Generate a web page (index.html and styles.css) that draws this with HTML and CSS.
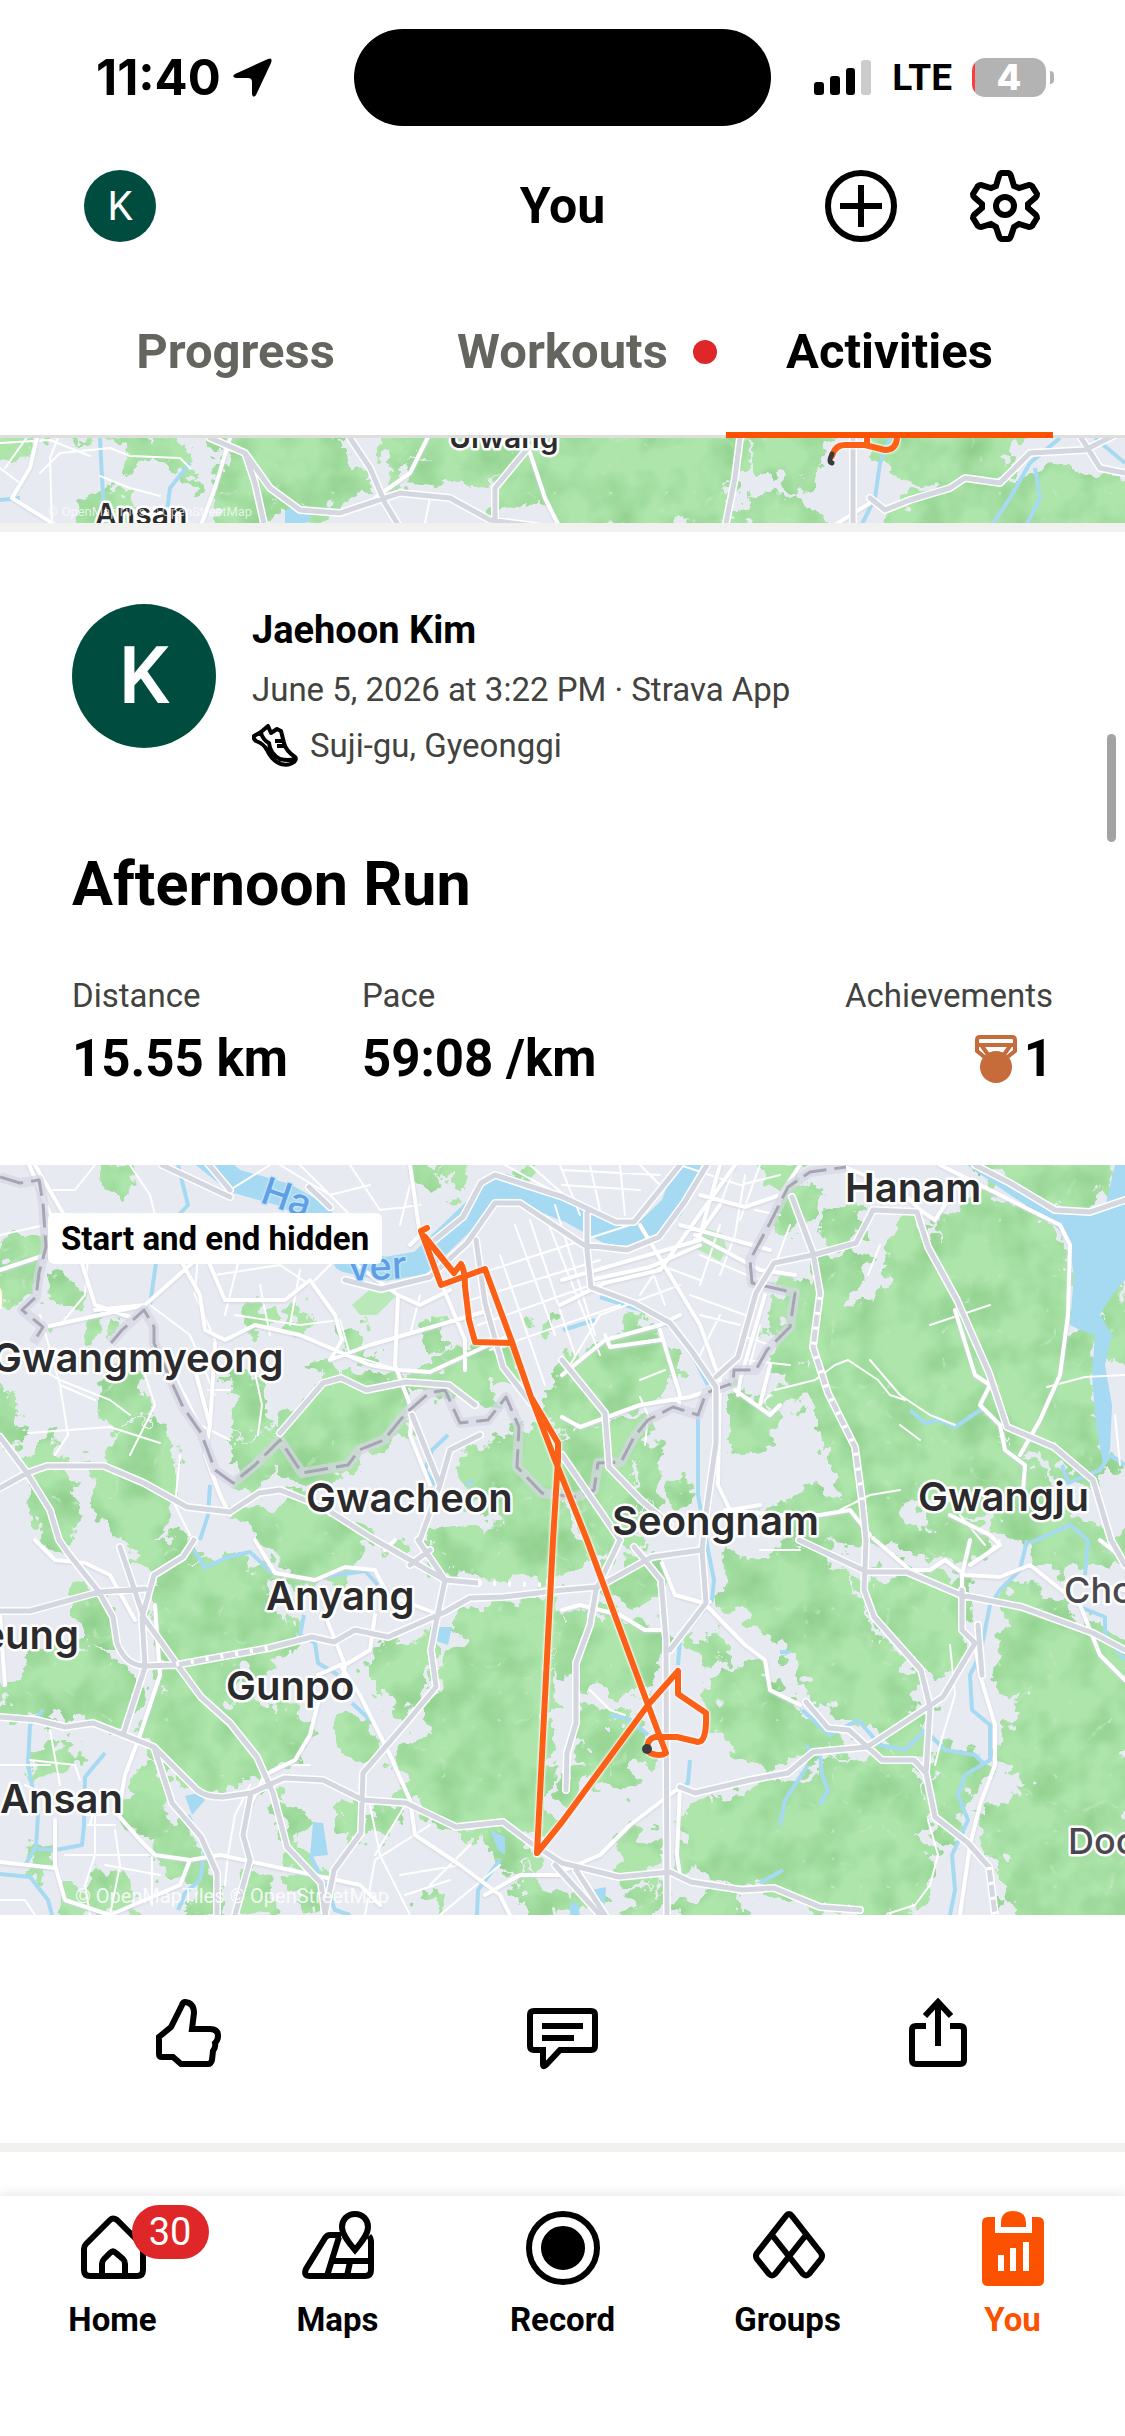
FILE: index.html
```html
<!DOCTYPE html>
<html lang="en">
	<head>
		<meta charset="UTF-8" />
		<meta name="viewport" content="width=device-width, initial-scale=1.0" />
		<title>You - Activities</title>
		<link rel="stylesheet" href="styles.css">
	</head>
	<body>
		<div class="status-bar">
			<div class="status-time">
				<span>11:40</span>
				<svg width="40" height="40" viewBox="0 0 40 40"><path d="M35 1Q40-1 38 5L23 37Q20 41 19 36V24Q19 20 15 20H3Q-2 19 2 16Z" /></svg>
			</div>
			<div class="island"></div>
			<div class="status-icons">
				<svg width="58" height="36" viewBox="0 0 58 36">
					<rect x="0" y="22" width="10" height="13" rx="3" />
					<rect x="16" y="16" width="10" height="19" rx="3" />
					<rect x="32" y="8" width="9" height="27" rx="3" />
					<rect x="47" y="0" width="10" height="35" rx="3" fill="#ccc" />
				</svg>
				<span class="network">LTE</span>
				<div class="battery"><span>4</span></div>
			</div>
		</div>

		<header class="header">
			<a href="#profile" class="avatar avatar-small">K</a>
			<h1>You</h1>
			<div class="header-actions">
				<button aria-label="Add">
					<svg class="icon" width="72" height="72" viewBox="0 0 72 72"><circle cx="36" cy="36" r="33" /><path d="M36 15V57M15 36H57" /></svg>
				</button>
				<button aria-label="Settings">
					<svg class="icon" width="72" height="72" viewBox="0 0 72 72"><path d="M33 3H39Q41 3 42 6L45 16 50 18 60 15Q62 15 63 16L68 24Q68 26 67 27L59 34V38L67 45Q68 46 68 48L63 56Q62 57 60 57L50 54 45 57 42 66Q41 69 39 69H33Q31 69 30 66L27 57 22 54 12 57Q10 57 9 56L4 48Q4 46 5 45L13 38V34L5 27Q4 26 4 24L9 16Q10 15 12 15L22 18 27 16 30 6Q31 3 33 3Z" /><circle cx="36" cy="36" r="9" /></svg>
				</button>
			</div>
		</header>

		<nav class="tabs">
			<a href="#progress" class="tab">Progress</a>
			<a href="#workouts" class="tab"><span class="tab-label">Workouts<i class="dot"></i></span></a>
			<a href="#activities" class="tab active">Activities</a>
		</nav>

		<main class="feed">
			<!-- Shared map styling -->
			<svg class="defs" width="0" height="0">
				<filter id="terrain" x="-5%" y="-5%" width="110%" height="110%" color-interpolation-filters="sRGB">
					<feTurbulence type="fractalNoise" baseFrequency="0.045" numOctaves="4" seed="4" result="noise" />
					<feDisplacementMap in="SourceGraphic" in2="noise" scale="48" xChannelSelector="R" yChannelSelector="G" result="forest" />
					<feTurbulence type="fractalNoise" baseFrequency="0.025" numOctaves="3" seed="9" />
					<feColorMatrix values="0 0 0 0 0.56  0 0 0 0 0.81  0 0 0 0 0.55  2 0 0 0 -0.8" />
					<feComposite in2="forest" operator="in" result="shade" />
					<feTurbulence type="turbulence" baseFrequency="0.018" numOctaves="3" seed="21" />
					<feColorMatrix values="0 0 0 0 0.74  0 0 0 0 0.91  0 0 0 0 0.74  -12 0 0 0 0.9" />
					<feComposite in2="forest" operator="in" result="ridges" />
					<feMerge>
						<feMergeNode in="forest" />
						<feMergeNode in="shade" />
						<feMergeNode in="ridges" />
					</feMerge>
				</filter>
			</svg>

			<svg class="map" viewBox="0 0 1125 85" role="img" aria-label="Previous activity map">
				<g class="forest" filter="url(#terrain)">
					<path d="M0-10H40L30 10 0 20ZM80-5 120 0 130 25 150 10 185 30 195 45 180 25 175 5 145 0ZM220-10H330L340 20 365 45 330 60 300 75 270 60 250 30 235 50ZM225 40 240 20 270 75 260 90H215ZM390-10H450L440 10 410 20 395 40 380 15ZM415 30 440 35 438 45 420 45ZM470-10 520-5 505 25 480 45 460 40 430 30ZM500 45 530 10 560-10H735L735 20 728 60 715 85H560L535 60 500 70ZM745-10H825L830 10 810 20 800 50 780 30 755 35ZM870-10H1030L1000 20 980 40 940 45 920 40 890 30 880 10ZM740 75 770 55 800 65 830 90H735ZM900 70 960 50 1010 40 1080 30 1125 50V95H890ZM80 65 100 50 130 60 120 90H80ZM225 60 250 50 240 90H220Z" />
				</g>
				<g class="water-line"><path d="M100 0 102 40 105 90M190 25 170 50 165 90M0 62 20 60M890 0 880 25 875 60 860 90M1060 0 1030 25 1010 60 990 90M1035 30 1040 60 1025 90M1095 0 1125 25" /></g>
				<path class="water" d="M285 72 300 68 312 80 300 90H285Z" />
				<g class="road minor"><path d="M0 5 50 2 90 18M40 35 60 15 110 10 130 18 180 20 190 30M100 38 130 50 160 58M0 30 20 45M60-5 50 20 52 90M430 60 425 85M30-5 5 30" /></g>
				<g class="road street"><path d="M38-5 30 30 12 60 60 90M230 0 215 50 200 90M430-5 410 35 375 60M525 0 545 60 560 90M870 65 830 90" /></g>
				<g class="road highway-case"><path id="peekRoads" d="M210 0 245 15 270 50 300 72 340 75 400 55 450 60 490 82 550 90M245 15 255 45 265 90M350 0 370 30 385 65 400 90M528 10 495 50 495 90M740 0 735 40 725 90M853-5V90M870 60 885 72 910 62 950 50 965 40 1000 45 1030 15 1085 12 1125-8M1075-10 1100 30 1125 35" /></g>
				<use href="#peekRoads" class="road highway" />
				<g class="route"><path d="M897 0Q896 12 885 12L865 7H845Q835 7 832 18M867 0V7" /></g>
				<path d="M832 16Q828 24 832 25" fill="none" stroke="#3a3a3a" stroke-width="5" stroke-linecap="round" />
				<g class="place place-small">
					<text x="449" y="10">Uiwang</text>
					<text x="95" y="87">Ansan</text>
				</g>
				<text class="credit credit-small" x="48" y="78">© OpenMapTiles © OpenStreetMap</text>
			</svg>

			<article class="activity">
				<div class="athlete">
					<div class="avatar avatar-large">K</div>
					<div class="athlete-info">
						<h3>Jaehoon Kim</h3>
						<p class="date">June 5, 2026 at 3:22 PM · Strava App</p>
						<p class="place-line">
							<svg class="shoe" width="46" height="44" viewBox="0 0 46 44"><path d="M2 12 9 8 16 2 19 9 25 5 29 7 32 19Q34 27 43 33 45 35 42 38 37 42 29 40 20 37 15 26 12 20 4 17 1 15 2 12ZM9 9Q11 16 17 19 18 30 28 35 36 37 43 35M23 17H31M25 22H33" /></svg>
							<span>Suji-gu, Gyeonggi</span>
						</p>
					</div>
				</div>

				<h2>Afternoon Run</h2>

				<dl class="stats">
					<div>
						<dt>Distance</dt>
						<dd>15.55 km</dd>
					</div>
					<div>
						<dt>Pace</dt>
						<dd>59:08 /km</dd>
					</div>
					<div class="achievements">
						<dt>Achievements</dt>
						<dd>
							<svg width="44" height="48" viewBox="0 0 44 48"><path d="M13 24 3 16V5Q3 2 6 2H38Q41 2 41 5V16L31 24M3 10H41M8 11 15 21M36 11 29 21" fill="none" stroke="#c66b3a" stroke-width="4" /><circle cx="22" cy="32" r="16" fill="#c66b3a" /></svg>
							<span>1</span>
						</dd>
					</div>
				</dl>

				<div class="map-box">
					<svg class="map" viewBox="0 0 1125 750" role="img" aria-label="Route map">
						<g class="forest" filter="url(#terrain)">
							<!-- North and west -->
							<path d="M105 0 128 5 125 28 105 25ZM0 78 40 75 30 130 0 140ZM53 115 80 125 65 145ZM85 160 105 155 95 180 82 175ZM250 145 268 150 262 165 250 160ZM290 155 305 145 308 160 295 165ZM350 165 365 175 372 195 355 190ZM430 155 445 160 440 185 430 180ZM415-5 435 0 432 18ZM447 0 462 5 455 30ZM520 0 532 0 530 20 520 15ZM535 160 548 155 545 165ZM108 215 130 208 145 245 118 262 103 240ZM230 215 255 208 262 258 240 268ZM310 205 328 198 330 218ZM95 290 150 258 172 290 165 345 140 375 100 350ZM33 290 50 278 72 330 68 380H45ZM0 220 20 260 12 280 0 270Z" />
							<path d="M262 272 320 225 350 215 406 220 410 250 395 275 360 290 345 310 300 318 278 300 258 320 235 310 232 285ZM240 345 300 335 350 365 400 380 350 378 348 410 300 418 285 395 260 375ZM400 215 430 203 470 190 510 182 515 205 482 215 500 238 460 225 425 222ZM458 300 505 272 548 265 560 300 556 385 520 385 500 355 465 330ZM545 230 563 215 575 240 555 260Z" />
							<!-- Central hills -->
							<path d="M130 380 175 375 190 385 155 405 140 395ZM155 425 170 402 200 398 240 395 268 408 262 440 290 465 285 485 268 485 270 505 232 500 225 525 238 548 300 545 298 580 270 610 235 612 225 632 195 620 160 590 148 580 160 535 155 510 180 505 160 465ZM82 430 108 430 112 465 95 478 82 455ZM25 497 60 480 100 490 132 512 125 560 80 552 40 550 0 542V530L30 522ZM128 620 150 600 168 650 155 680 130 650ZM35 590 72 580 75 600 40 605ZM32 685 50 688 45 705 30 700ZM60 730 110 710 130 735 100 750H62ZM155 655 180 660 205 700 220 740 200 755 190 715 160 700ZM242 705 262 710 270 750H245ZM278 640 295 650 300 690 335 730 310 740 290 700ZM340 645 360 640 360 670 342 665ZM365 650 400 640 385 665Z" />
							<path d="M425 370H563V408H450ZM460 448 552 435 545 600 540 665 500 652 460 662 420 640 395 605 430 565 440 520 450 490 468 470ZM365 495 395 480 432 475 425 502 415 530 400 547 385 530 365 512ZM342 562 365 550 374 580 350 590ZM485 660 520 665 530 700 510 700 495 680ZM515 715 540 712 563 735V750H530ZM425 735 440 730 440 745Z" />
							<!-- Seongnam -->
							<path d="M562 205 605 178 665 188 672 210 640 235 600 248 580 262 560 235ZM562 270 600 262 645 255 635 290 615 300 628 330 640 378H600L570 330ZM635 280 650 260 655 300 650 360 640 330ZM562 375H605L590 402 562 405ZM600 420 650 395 658 415 640 430ZM562 455 600 448 662 468 655 500 640 530 600 520 562 505ZM580 550 640 560 640 590 620 622 590 610ZM562 600 580 610 570 640ZM630 670 655 680 652 720 620 715ZM575 720 600 740 590 750H565ZM620 745 660 730 655 750ZM700 470 725 485 720 495 702 485ZM675 325 690 320 692 335 675 340ZM615 165 650 160 655 175 620 180ZM725 225 770 245 765 280 735 285Z" />
							<path d="M765 0 800 0 780 25ZM792 20 815 25 810 45 785 62 775 65 780 40ZM828 48 862 45 865 68 835 75 822 60ZM785 120 805 130 800 180 790 210 775 195ZM772 230 800 205 825 210 820 225 790 240ZM775 345 800 330 835 335 865 345 900 340 900 375H800L780 360Z" />
							<!-- Namhansanseong and the eastern hills -->
							<path d="M820 98 860 90 850 130 870 145 890 110 900 60 922 60 940 110 960 160 975 205 988 240 990 275 1015 295 1050 315 1070 350 1100 385H1050L1000 350 960 335 915 330 890 350 845 335 848 300 830 290 818 250 800 225 810 195 805 150ZM945 60 990 30 1030 45 1062 72 1066 160 1060 200 1035 250 1020 288 1000 262 985 220 960 160 935 100ZM1075 168 1092 165 1088 205 1095 270 1112 300 1080 325 1050 290 1035 275 1050 240ZM975-5H1108L1100 30 1080 45 1050 38 1020 15ZM1085 55 1112 60 1108 90 1090 85ZM1100 150 1125 120V200L1110 180ZM900 375 960 345 985 380 960 395Z" />
							<path d="M725 402 770 388 820 385 850 420 862 460 895 500 918 518 900 545 870 568 850 550 830 540 800 510 790 480 760 455 730 440ZM865 418 900 408 960 418 960 470 945 512 925 500 900 470 870 440ZM712 522 740 505 765 510 770 530 800 545 830 570 842 585 800 592 770 595 730 582 712 560ZM775 625 820 605 880 590 912 600 925 640 905 660 925 680 935 700 920 730 900 750 850 742 800 732 750 720 715 715 690 690 685 650 720 640 740 625ZM700 730 740 735 750 755H690ZM885 560 920 545 922 590 900 590ZM1005 475 1060 465 1095 490 1130 530V755H1010L1000 690 985 645 1040 632 1010 600 1008 560 1040 540 1000 520ZM1010 420 1060 440 1125 485V530L1060 500 1005 460ZM1025 370H1125V400L1090 395 1060 402 1035 390ZM935 590 975 590 985 610 960 632 950 680 935 650ZM950 480 970 475 960 500Z" />
						</g>
						<path class="park" d="M352 140 375 120 397 130 377 150 360 150ZM693 82 703 63 722 68 727 85 720 96Z" />

						<!-- Water -->
						<path class="river" d="M200-12 235 16 285 30 320 50 345 95 385 104 420 98 447 72 475 45 490 25 505 21 570 46 612 69 645 68 672 42 692-10" />
						<path class="water" d="M964-2H978L1011 20 1057 45 1085 50 1105 42 1115 0H1125V115L1112 130 1100 150 1112 170 1105 200 1112 240 1110 285 1103 300 1096 260 1092 210 1095 170 1080 165 1070 160 1074 110 1068 75 1050 55 1010 30ZM185 631 198 628 205 635 192 650ZM313 657 323 658 328 690 310 692ZM438 462 452 462 448 480 436 476ZM490 665 505 672 505 690 498 685ZM463 318 475 315 470 322ZM592 725 606 722 605 740ZM570 738 578 738 580 750H570Z" />
						<g class="water-line">
							<path d="M178 0 188 40 160 70 150 140M194 385 205 403 228 392 250 387 272 408M325 412 365 406 378 420M304 450 300 470 315 478 318 498 338 510M352 538 370 555M43 545 30 560 28 600 38 650 36 682 25 700M0 709 30 712 48 735 52 750M105 588 85 612 84 660 82 680 55 685 38 684M188 650 205 685 200 715 185 728 178 745M310 690 325 720 335 745 350 750M500 695 478 725 477 750M210 320 208 350 200 375M448 270 432 285 425 305 435 320" />
							<path d="M563 165 595 155M600 132 650 148 675 165 695 195 708 220M698 250V330L708 385 714 415 712 435 680 475 678 500M690 595 688 618 680 625M610 550 630 555 648 570M780 487H790M910 245 925 258 940 255 955 262 985 242M1062 300 1068 318 1100 305 1110 290 1125 300M1030 378 1070 360 1088 375M1027 375 1020 405 1000 425 990 440 980 490 970 510 972 545 990 560 990 595 965 610 958 630 968 655 952 690 955 725 950 750M802 545 830 570 858 555 880 580 905 585 925 565M925 565 945 585 975 590 985 600M810 590 807 580M820 590 822 610 828 625 820 640M808 600 785 635 780 660M1080 442 1105 452 1105 470 1125 495M783 705 760 718M1088 375 1085 410" />
						</g>

						<!-- Local streets -->
						<g class="road minor">
							<path d="M0 70 45 60 90 65 130 55M50 25 75 25 95 0M130 0 150 30 160 70M90 65 85 130 60 160M160 70 220 90 250 60M200 60 195 130 215 175M240 90 225 150M215 110 280 100 310 120 340 90M235 150 300 160 340 155 350 190 400 205M260 120 270 170M300 105 290 160M150 140 190 170 215 230M40 150 60 220 95 235M60 220 68 270 55 290M15 190 60 215 110 235 130 250M28 268 110 262 160 278M145 210 155 240 130 290M170 200 200 260 230 275M208 225H230M255 208 262 240 258 270M180 290 175 340 190 370M420 130 410 170M400 60 410 20M230 25 270 0M280 0 330 30 370 20M350 0 380 45 420 40M300 0 350 50" />
							<path d="M475 110 630 60M470 135 600 95M478 160 605 115M490 185 620 140M515 60 555 170M530 55 575 190M545 50 600 190M500 90 545 220M555 40 595 170M570 200 600 150 680 120M505 0 560 30M530 0 570 35M560 0 580 50M590 0 600 45M620 0 625 50M640 0 660 20M562 20 640 25M562 5 660 10M610 110 660 100 700 115M660 100 640 130M700 90 770 120M690 130 745 150M720 60 700 120M735 0 720 40M745 10 735 70 720 110M760 0 740 55M780 50 755 45M790 60 775 100M700 150 740 160M720 150 700 190M740 170 770 180M760 160 750 200M680 0 740 20 780 10M650 100 665 140" />
							<path d="M0 600 50 600M50 565 60 620M30 595 75 600 80 615M25 620 60 635 85 640M95 640 90 660M85 650H100M88 660H115M65 690H150M95 640V690L85 720 90 750M152 690V740M115 665 120 700 110 750M105 700 160 710M370 640 380 690 410 750M375 695 430 660M405 640 375 690M430 720 470 680M400 710 460 700M440 750 500 700M405 730 450 715M375 695 365 750M0 735 25 735 35 750M250 620 235 650 228 690 225 720M290 600 310 600" />
							<path d="M745 195 790 200M770 230 760 240M870 195 900 230 930 250 955 260M840 345 870 330 900 325M960 350 985 380M1000 375 980 395M775 225 815 215 835 200 848 195 878 215 890 230 905 235M1047 222 1085 212 1125 210M1115 250 1120 300M950 480 955 530 940 580 935 600M928 655 938 690 930 720 915 740 890 748M590 525 610 545 625 550" />
							<path d="M640 232 648 250 645 280M640 215 665 205M760 385H800M900 260 920 275M930 160 990 140M880 80 868 110" />
						</g>
						<!-- Main streets -->
						<g class="road street">
							<path d="M35 0 70 60 95 140 130 152M27-5 55 60M0 105 45 90M95 145 145 140 190 100 210 80M45 162 145 140M155 60 250 55M175 85 200 130 205 165 225 175 255 160 300 170 370 200 400 205 430 207 510 170M210 100 225 135H285L310 115 335 150 342 175 330 195M395 200 398 130 350 95M398 130 420 140 450 125M395 200 412 245 410 270 430 320M330 195 370 180 490 145M440 115 465 175 465 205M410 0 420 70 410 80M195 205 210 260 205 290 220 330 230 350M215 178 210 260M35 375 55 395 85 398 110 410 135 455M0 450 5 520M155 440 160 510 140 570 125 610 118 650M118 650 140 675 155 690 190 695 220 690 290 705 360 720 380 740M55 655V700L65 735 110 750 180 720 190 695M0 697 55 703M255 375 275 408 315 415 345 402 375 405 388 430 440 450M325 450 345 500 340 530M345 500 370 485 375 450M340 500 360 530 390 590 410 635 415 670 460 700 500 730 510 750M320 530 310 570 295 595 265 610 250 640M385 385 395 375M485 730 520 710 560 710M345 498 318 510" />
							<path d="M560 140 605 118 660 105 735 0M590 115 650 102 700 80M695 70 760 105 795 110M680 60 770 85M640 60 700 160 720 215M562 115 700 75M562 210 605 175 660 160 680 150M605 170 610 182 660 175M660 165 680 230 678 245M562 252 580 262 640 240 690 232 710 225M720 215 718 320 730 345 760 340M735 225 770 250 780 240M765 130 740 215 738 230M760 240 770 200M720 40 695 75M720 0 700 70M700 30 745 42 780 30 800 0M840 0 900 25 920 45M920 45 935 55 945 40M940 0 1000 30 1060 60 1070 80 1068 150 1060 210 1040 255 1020 290M955 145 975 210 990 220 980 240 1000 260 1005 285 1025 300 1022 340M725 345 780 350 820 350 850 345 870 370M873 373 910 405 930 405 945 395 965 410 1000 412 1030 400 1080 440 1100 490 1125 515M970 375 962 410V430M1100 375 1125 395M662 398 675 430 700 437H710M562 445 580 440 620 450 645 465 662 465M706 440 745 480 765 495 770 525 800 540M975 480 980 510 995 560 995 600 980 640 970 680 960 750M680 622 677 690 680 710M680 622 630 660 600 690 565 705M950 350 990 370 1000 380 970 400M1125 425 1090 420" />
						</g>

						<!-- City limits -->
						<g class="limit-case">
							<path id="limit" d="M0 12 20 18 39 15 43 38 46 82 39 108 36 132 22 145 43 162 33 178M111 178 122 165 144 145 154 162V178L172 218 183 242 201 268 215 305 233 318 255 300 280 275 302 308 348 300 359 285 384 275 406 248 429 228 445 225 460 258 488 255 506 232 519 262 517 302 542 328 576 332 594 325 598 298 621 297 634 272 648 255 673 242 698 250 706 228 733 218 734 205 756 205 767 185 790 162 795 128 752 118 750 95 770 58 788 22 810 7 846 2" />
						</g>
						<use href="#limit" class="limit" />

						<!-- Expressways -->
						<g class="road highway-case">
							<path id="highways" d="M0 323 27 308 47 301H104L144 318 187 342 230 347 259 328 280 325 323 342 370 372 445 415 478 418M0 272 27 308 50 345 59 375 68 388 99 427 113 452 117 478Q125 500 144 501L176 500 269 483 312 472 334 477 355 465 388 472 445 447 470 433 503 432 563 425 598 422 652 392 702 385M0 446H30L99 427 145 424M194 375 183 392 154 410 142 452 145 502 124 567M120 382 144 453 176 498 201 532 230 558 257 592 273 628 287 682 321 718 325 750M0 552 36 555 65 562 93 558 129 572 154 582 197 625Q205 632 223 632L251 628 284 613 323 615 363 635 406 638 456 662 503 657 531 678 562 698 619 712 670 707 691 717 742 725 774 723 820 742 860 745M154 582 172 638 201 672 217 708V750M418 375 445 415 436 458 431 485 436 522 406 558 363 608 361 668 334 705 325 750M430 385 410 400M251 628 243 670 250 695 235 750M280 268 323 218 341 213 366 225 406 217 449 220 475 240M412 250 440 320 420 375M440 320 450 285 480 270M476 75 485 138 503 202 531 238" />
							<path id="highways2" d="M162 0 230 32M309 22 330 42M205-5 230 25M345 115 381 124 430 112 467 78 495 38 520 38 584 80 627 85 659 72 684 38 707 0M431 78 463 52 481 18 495 10 563 32 616 57H634L680 0M587 48V85L591 122 634 138 670 158 691 185 716 222V278L706 348 702 385 706 438 670 485M716 212 738 192 756 128 774 98 813 90 856 78 873 45 917 47 928 82 957 135 989 208 1007 262 1054 282 1093 315 1111 375 1125 400M975 0 1010 18 1055 45 1090 47 1125 35M792 32 813 88 820 128 813 182 828 228 855 282 862 335 866 375 864 425 874 452 921 505 930 542 926 608 935 652 968 678 989 702 995 750M799 375 867 407H907L961 430 1022 442 1093 468 1125 485M962 425V465L975 478 943 532 867 582 813 587 788 608 750 615 695 628 680 622M806 537 828 563 849 565 882 595H914L926 608M634 382 661 415 666 475 667 750M620 375 596 425 590 460 576 498V558L567 588 566 625M562 195 605 248 609 302 641 335 670 360M562 290 620 375M555 700 600 750M576 705 605 750M978 460 982 510" />
						</g>
						<use href="#highways" class="road highway" />
						<use href="#highways2" class="road highway" />
						<path class="tunnel" d="M820 132 813 182 828 228 855 282 862 335M176 499 269 483M989 702 995 750M478 418 550 420" />

						<g class="river-name">
							<text transform="translate(259 37) rotate(19)">Ha</text>
							<text transform="translate(349 116) rotate(-3)">ver</text>
						</g>
						<g class="place">
							<text x="-8" y="207">Gwangmyeong</text>
							<text x="306" y="347">Gwacheon</text>
							<text x="845" y="37">Hanam</text>
							<text x="612" y="370">Seongnam</text>
							<text x="918" y="346">Gwangju</text>
							<text x="266" y="445">Anyang</text>
							<text x="226" y="535">Gunpo</text>
							<text x="79" y="484" text-anchor="end">Siheung</text>
							<text x="0" y="648">Ansan</text>
						</g>
						<g class="place place-minor">
							<text x="2" y="142" text-anchor="end">Bucheon</text>
							<text x="1064" y="438">Chowol</text>
							<text x="1068" y="689">Docheok</text>
						</g>

						<g class="route">
							<path d="M427 63 421 66 427 82 441 120 485 104 512 177 531 232 558 278V295L553 375 537 688 562 657 648 540 678 506V529L706 548Q707 577 698 577L677 572H655Q647 574 647 584M425 72 454 108 461 99Q465 105 465 122L469 155 475 177 512 178 531 232 555 295 587 375 648 540 666 588Q660 592 650 588" />
						</g>
						<circle cx="647" cy="584" r="5" fill="#3c3c3c" />
						<text class="credit" x="75" y="738">© OpenMapTiles © OpenStreetMap</text>
					</svg>
					<span class="map-note">Start and end hidden</span>
				</div>

				<div class="actions">
					<button aria-label="Give kudos">
						<svg class="icon" width="72" height="72" viewBox="0 0 72 72"><path d="M33 4Q42 5 42 15L40 31H58Q66 31 66 38 66 42 63 45 64 49 61 53L60 62Q59 66 56 66H29L21 59H10Q7 59 7 56V39L19 29 30 7Q31 4 33 4Z" /></svg>
					</button>
					<button aria-label="Comment">
						<svg class="icon" width="72" height="72" viewBox="0 0 72 72"><path d="M7 13H64Q68 13 68 17V48Q68 52 64 52H33L19 67Q16 70 16 66V52H7Q3 52 3 48V17Q3 13 7 13ZM15 28H56M15 40H47" /></svg>
					</button>
					<button aria-label="Share">
						<svg class="icon" width="72" height="72" viewBox="0 0 72 72"><path d="M24 28H14Q10 28 10 32V62Q10 66 14 66H58Q62 66 62 62V32Q62 28 58 28H48M36 48V5M23 18 36 4 49 18" /></svg>
					</button>
				</div>
			</article>
			<div class="scroll-thumb"></div>
		</main>

		<nav class="bottom-nav">
			<a href="#home" class="nav-item">
				<span class="nav-icon">
					<svg class="icon" width="76" height="76" viewBox="0 0 76 76"><path d="M35 9 11 33Q9 35 9 38V59Q9 65 15 65H62Q68 65 68 59V38Q68 35 66 33L42 9Q38 6 35 9ZM27 64V53Q27 50 29 48L35 42Q38 39 41 42L48 48Q50 50 50 53V64" /></svg>
					<b class="badge">30</b>
				</span>
				Home
			</a>
			<a href="#maps" class="nav-item">
				<svg class="icon" width="76" height="76" viewBox="0 0 76 76"><path d="M55 3C47 3 42 9 42 16 42 24 50 33 55 39 60 33 68 24 68 16 68 9 63 3 55 3ZM41 24H30Q27 24 25 27L6 58Q3 65 10 65H65Q71 65 71 59V30Q71 27 69 25M39 26 27 65M32 50H71M50 51 47 65" /></svg>
				Maps
			</a>
			<a href="#record" class="nav-item">
				<svg class="icon" width="76" height="76" viewBox="0 0 76 76"><circle cx="38" cy="37" r="34" /><circle cx="38" cy="37" r="19" fill="#000" /></svg>
				Record
			</a>
			<a href="#groups" class="nav-item">
				<svg class="icon" width="76" height="76" viewBox="0 0 76 76"><path d="M36 5Q39 1 42 5L71 42Q73 45 71 48L59 63Q56 66 53 63L22 24M36 5 7 42Q5 45 7 48L19 63Q22 66 25 63L56 24" /></svg>
				Groups
			</a>
			<a href="#you" class="nav-item active">
				<svg width="76" height="76" viewBox="0 0 76 76"><path fill="#fc5200" d="M13 6H20V22H57V6H63Q69 6 69 12V69Q69 75 63 75H13Q7 75 7 69V12Q7 6 13 6ZM26 16V12Q26 0 38 0 51 0 51 12V16Z" /><path fill="#fff" d="M23 44H29V60H23ZM35 37H41V60H35ZM48 31H54V60H48Z" /></svg>
				You
			</a>
		</nav>
	</body>
</html>
```
FILE: styles.css
```css
:root {
	--accent: #fc5200;
	--green: #004d3f;
	--red: #df2628;
	--text-muted: #42423e;
	--divider: #f1f1ef;
	--gutter: 72px;
}
* {
	box-sizing: border-box;
}
body {
	font-family: Roboto, "Noto Sans", sans-serif;
	color: #000;
	background-color: #fff;
	margin: 0;
	min-height: 100vh;
	display: flex;
	flex-direction: column;
}
h1,
h2,
h3,
p,
dl,
dd {
	margin: 0;
}
a {
	color: inherit;
	text-decoration: none;
}
button {
	background: none;
	border: none;
	padding: 0;
	cursor: pointer;
}
svg {
	display: block;
	flex-shrink: 0;
}
.icon {
	fill: none;
	stroke: #000;
	stroke-width: 6;
}

/* Status bar */
.status-bar {
	display: grid;
	grid-template-columns: 1fr auto 1fr;
	align-items: center;
	padding: 29px 72px 0 96px;
	font-family: Inter, sans-serif;
	font-weight: 700;
}
.status-time {
	display: flex;
	align-items: center;
	gap: 12px;
	font-size: 49px;
	line-height: 56px;
}
.island {
	width: 417px;
	height: 97px;
	border-radius: 49px;
	background-color: #000;
	margin-right: 24px;
}
.status-icons {
	display: flex;
	align-items: center;
	justify-content: flex-end;
	gap: 20px;
}
.network {
	font-family: Roboto, sans-serif;
	font-size: 37px;
}
.battery {
	position: relative;
	width: 74px;
	height: 39px;
	margin-right: 7px;
	border-radius: 13px;
	background: linear-gradient(to right, #ff3b3b 3px, #b3b3b3 3px);
	color: #fff;
	font-size: 36px;
	font-weight: 800;
	line-height: 39px;
	text-align: center;
}
.battery::after {
	content: "";
	position: absolute;
	right: -8px;
	top: 13px;
	width: 4px;
	height: 13px;
	border-radius: 0 6px 6px 0;
	background-color: #b3b3b3;
}

/* Header */
.header {
	display: grid;
	grid-template-columns: 1fr auto 1fr;
	align-items: center;
	padding: 44px 84px 0;
}
.header h1 {
	font-size: 50px;
	line-height: 60px;
}
.header-actions {
	display: flex;
	justify-content: flex-end;
	gap: 72px;
}
.avatar {
	display: flex;
	align-items: center;
	justify-content: center;
	border-radius: 50%;
	background-color: var(--green);
	color: #fff;
}
.avatar-small {
	width: 72px;
	height: 72px;
	font-size: 40px;
}
.avatar-large {
	width: 144px;
	height: 144px;
	font-size: 80px;
	font-weight: 500;
}

/* Tabs */
.tabs {
	display: flex;
	padding: 0 var(--gutter);
	box-shadow: inset 0 -3px #dededc;
}
.tab {
	flex: 1;
	padding: 80px 0 50px;
	border-bottom: 6px solid transparent;
	color: #65655f;
	font-size: 49px;
	font-weight: 700;
	line-height: 60px;
	text-align: center;
}
.tab.active {
	color: #000;
	border-color: var(--accent);
}
.tab-label {
	position: relative;
}
.dot {
	position: absolute;
	right: -49px;
	top: 17px;
	width: 24px;
	height: 24px;
	border-radius: 50%;
	background-color: var(--red);
}

/* Feed */
.feed {
	position: relative;
	flex-grow: 1;
}
.scroll-thumb {
	position: absolute;
	right: 9px;
	top: 296px;
	width: 9px;
	height: 108px;
	border-radius: 5px;
	background-color: #a3a3a3;
}
.activity {
	border-top: 9px solid var(--divider);
	border-bottom: 9px solid var(--divider);
	padding-top: 72px;
}
.athlete {
	display: flex;
	gap: 36px;
	padding: 0 var(--gutter);
}
.athlete h3 {
	font-size: 38px;
	line-height: 52px;
}
.date,
.place-line,
.stats dt {
	color: var(--text-muted);
	font-size: 33px;
	line-height: 44px;
}
.date {
	padding: 12px 0;
}
.place-line {
	display: flex;
	gap: 12px;
}
.shoe {
	fill: none;
	stroke: #000;
	stroke-width: 4;
	stroke-linejoin: round;
}
.activity h2 {
	font-size: 61px;
	line-height: 72px;
	padding: 80px var(--gutter) 54px;
}
.stats {
	display: grid;
	grid-template-columns: auto auto 1fr;
	gap: 74px;
	padding: 0 var(--gutter) 76px;
}
.stats dd {
	display: flex;
	align-items: center;
	gap: 6px;
	padding-top: 11px;
	font-size: 51px;
	font-weight: 700;
	line-height: 60px;
}
.achievements {
	text-align: right;
}
.achievements dd {
	justify-content: flex-end;
}
.actions {
	display: grid;
	grid-template-columns: repeat(3, 1fr);
	justify-items: center;
	padding: 83px 0 73px;
}

/* Maps */
.defs {
	position: absolute;
}
.map-box {
	position: relative;
}
.map {
	width: 100%;
	height: auto;
	background-color: #e8eaf2;
	overflow: hidden;
}
.map-note {
	position: absolute;
	left: 48px;
	top: 48px;
	padding: 0 13px;
	border-radius: 6px;
	background-color: #fff;
	font-size: 33px;
	font-weight: 700;
	line-height: 51px;
}
.forest {
	fill: #ade5ab;
	stroke: #ade5ab;
	stroke-width: 11;
	stroke-linejoin: round;
}
.park {
	fill: #b9e9b9;
}
.water {
	fill: #a6d9f2;
}
.river {
	fill: none;
	stroke: #a6d9f2;
	stroke-width: 24;
	stroke-linejoin: round;
}
.water-line {
	fill: none;
	stroke: #a6d9f2;
	stroke-width: 4;
	stroke-linejoin: round;
}
.road {
	fill: none;
	stroke: #fff;
	stroke-linejoin: round;
	stroke-linecap: round;
}
.minor {
	stroke-width: 2;
}
.street {
	stroke-width: 4;
	filter: drop-shadow(0 1px 1px #cfd2de);
}
.highway-case {
	stroke-width: 8;
}
.highway {
	stroke: #d4d6e0;
	stroke-width: 5;
}
.tunnel {
	fill: none;
	stroke: #fff;
	stroke-width: 5;
	stroke-dasharray: 3 12;
}
.limit-case,
.limit {
	fill: none;
	stroke-linejoin: round;
}
.limit-case {
	stroke: #d6d6e4;
	stroke-width: 10;
	stroke-opacity: 0.7;
}
.limit {
	stroke: #a6a6b2;
	stroke-width: 3;
	stroke-dasharray: 24 8;
}
.route path {
	fill: none;
	stroke: #fc6016;
	stroke-width: 6;
	stroke-linejoin: round;
	stroke-linecap: round;
}
.route {
	filter: drop-shadow(0 0 1px #fff) drop-shadow(0 0 1px #fff);
}
.place,
.river-name {
	font-family: Inter, sans-serif;
	font-size: 40px;
	font-weight: 600;
	fill: #2b2b2e;
	stroke: #fff;
	stroke-width: 5;
	stroke-linejoin: round;
	paint-order: stroke;
}
.place-minor {
	font-size: 36px;
	font-weight: 500;
	fill: #4a4a4e;
}
.place-small {
	font-size: 30px;
}
.river-name {
	font-size: 38px;
	font-weight: 500;
	fill: #5f9fe6;
	stroke: #c4e4f7;
	stroke-width: 3;
}
.credit {
	font-size: 20px;
	fill: #fff;
	fill-opacity: 0.85;
}
.credit-small {
	font-size: 13px;
	fill-opacity: 0.7;
}

/* Bottom navigation */
.bottom-nav {
	display: grid;
	grid-template-columns: repeat(5, 1fr);
	padding: 15px 0 96px;
	background-color: #fff;
	box-shadow: 0 -2px 12px rgba(0, 0, 0, 0.1);
}
.nav-item {
	display: flex;
	flex-direction: column;
	align-items: center;
	gap: 13px;
	font-size: 33px;
	font-weight: 700;
	line-height: 40px;
}
.nav-item.active {
	color: var(--accent);
}
.nav-icon {
	position: relative;
}
.badge {
	position: absolute;
	left: 57px;
	top: -6px;
	width: 77px;
	border-radius: 27px;
	background-color: var(--red);
	color: #fff;
	font-size: 38px;
	font-weight: 400;
	line-height: 54px;
	text-align: center;
}
```
